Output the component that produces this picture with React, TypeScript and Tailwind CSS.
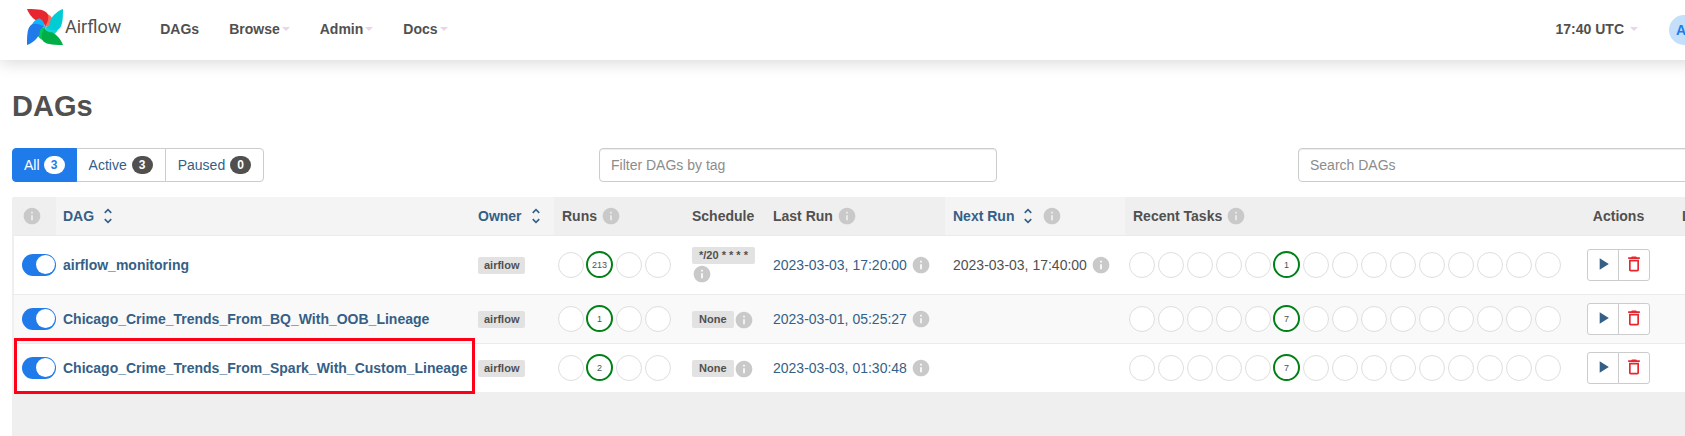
import React from "react";

const ICONS = {
  info: "M12 2C6.48 2 2 6.48 2 12s4.48 10 10 10 10-4.48 10-10S17.52 2 12 2zm1 15h-2v-6h2v6zm0-8h-2V7h2v2z",
  sort: "M12 5.83L15.17 9l1.41-1.41L12 3 7.41 7.59 8.83 9 12 5.83zm0 12.34L8.83 15l-1.41 1.41L12 21l4.59-4.59L15.17 15 12 18.17z",
  play: "M8 5v14l11-7z",
  trash:
    "M16 9v10H8V9h8m-1.5-6h-5l-1 1H5v2h14V4h-3.5l-1-1zM18 7H6v12c0 1.1.9 2 2 2h8c1.1 0 2-.9 2-2V7z",
};

function Icon({ name, className = "" }: { name: keyof typeof ICONS; className?: string }) {
  return (
    <svg viewBox="0 0 24 24" className={`size-5 shrink-0 fill-current ${className}`} aria-hidden="true">
      <path d={ICONS[name]} />
    </svg>
  );
}

const Info = () => <Icon name="info" className="text-[#c9c9c9]" />;

const BLADES = [
  { angle: 0, main: "#e8262d", light: "#ff6b5b" },
  { angle: 90, main: "#00ccd6", light: "#11d5e0" },
  { angle: 180, main: "#00ad46", light: "#04c95a" },
  { angle: 270, main: "#1f7bea", light: "#0cb6ff" },
];

function Pinwheel() {
  return (
    <svg viewBox="0 0 108 108" className="size-9" aria-hidden="true">
      {BLADES.map((b) => (
        <g key={b.angle} transform={`rotate(${b.angle} 54 54)`}>
          <path fill={b.light} d="M58 14C70 17 76 26 80 37C75 48 64 52 54 54C58 40 64 27 58 14Z" />
          <path fill={b.main} d="M0 0C36 0 54 2 62 15C67 27 62 40 54 54C54 46 48 37 33 38C18 30 6 16 0 0Z" />
        </g>
      ))}
    </svg>
  );
}

const Caret = () => (
  <span className="border-x-4 border-t-4 border-x-transparent border-t-[#e8d5e8]" aria-hidden="true" />
);

function NavItem({ label, menu = true }: { label: string; menu?: boolean }) {
  return (
    <a href="#" className="flex items-center gap-0.5 px-[15px] leading-5">
      {label}
      {menu && <Caret />}
    </a>
  );
}

function Circles({ total, at, value }: { total: number; at: number; value: number }) {
  return (
    <div className="flex h-7 items-center">
      {Array.from({ length: total }, (_, i) => (
        <span key={i} className="flex w-[29px] shrink-0 justify-center">
          {i === at ? (
            <a
              href="#"
              className="flex size-[27px] items-center justify-center rounded-full border-2 border-[#008016] bg-white text-[9px] leading-3 text-[#51504f]"
            >
              {value}
            </a>
          ) : (
            <span className="size-[26px] rounded-full border border-[#dedede] bg-white" />
          )}
        </span>
      ))}
    </div>
  );
}

const Tag = ({ children, className = "px-1.5" }: { children: React.ReactNode; className?: string }) => (
  <a href="#" className={`rounded-xs bg-[#e2e2e2] text-[11px] leading-[17px] font-bold whitespace-nowrap text-[#51504f] ${className}`}>
    {children}
  </a>
);

const FILTERS = [
  { label: "All", count: 3, box: "z-10 gap-1 rounded-l border-[#1f7bea] bg-[#1f7bea] px-[11px] text-white", badge: "bg-white text-[#1f7bea]" },
  { label: "Active", count: 3, box: "-ml-px gap-[5px] border-[#ccc] bg-white px-3 text-[#355f86]", badge: "bg-[#51504f] text-white" },
  { label: "Paused", count: 0, box: "-ml-px gap-[5px] rounded-r border-[#ccc] bg-white px-3 text-[#355f86]", badge: "bg-[#51504f] text-white" },
];

const ROWS = [
  { id: "airflow_monitoring", runs: 213, schedule: "*/20 * * * *", last: "2023-03-03, 17:20:00", next: "2023-03-03, 17:40:00", tasks: 1, size: "h-[59px]", bg: "bg-white" },
  { id: "Chicago_Crime_Trends_From_BQ_With_OOB_Lineage", runs: 1, schedule: "None", last: "2023-03-01, 05:25:27", next: "", tasks: 7, size: "h-[49px]", bg: "bg-[#f9f9f9]" },
  { id: "Chicago_Crime_Trends_From_Spark_With_Custom_Lineage", runs: 2, schedule: "None", last: "2023-03-03, 01:30:48", next: "", tasks: 7, size: "h-[49px]", bg: "bg-white", highlighted: true },
];

const INPUT =
  "h-[34px] rounded border border-[#ccc] bg-white px-[11px] text-sm text-[#51504f] shadow-[inset_0_1px_1px_rgba(0,0,0,0.075)] outline-none placeholder:text-[#8c8c8c]";

export default function App() {
  return (
    <div className="overflow-x-hidden bg-white font-['Liberation_Sans',Arial,sans-serif] text-sm text-[#51504f]">
      <div className="-mr-[62px]">
        <header className="flex h-[60px] items-center justify-between pr-12 pl-[27px] font-bold shadow-[0_2px_16px_rgba(0,0,0,0.17)]">
          <div className="flex items-center pb-1.5">
            <a href="#" className="mr-6 flex items-center gap-0.5 font-['Roboto',sans-serif] text-lg font-normal">
              <Pinwheel />
              Airflow
            </a>
            <nav className="flex items-center pt-1">
              <NavItem label="DAGs" menu={false} />
              <NavItem label="Browse" />
              <NavItem label="Admin" />
              <NavItem label="Docs" />
            </nav>
          </div>
          <div className="flex items-center">
            <a href="#" className="flex items-center gap-1.5 px-[15px] pb-0.5 leading-5">
              17:40 UTC
              <Caret />
            </a>
            <a href="#" className="ml-4 flex size-[30px] items-center rounded-full bg-[#c3dffa] pl-[7px] text-[#1f7bea]">
              A
            </a>
          </div>
        </header>

        <main className="px-3 pt-[30px]">
          <h2 className="mb-[26px] text-[29px] leading-8 font-bold">DAGs</h2>

          <div className="mb-[15px] grid grid-cols-[587fr_699fr_437fr]">
            <div className="flex">
              {FILTERS.map((f) => (
                <button key={f.label} type="button" className={`flex h-[34px] items-center border ${f.box}`}>
                  {f.label}
                  <span className={`flex h-[18px] w-[21px] items-center justify-center rounded-full text-xs font-bold ${f.badge}`}>
                    {f.count}
                  </span>
                </button>
              ))}
            </div>
            <div>
              <input aria-label="Filter DAGs by tag" placeholder="Filter DAGs by tag" className={`w-[398px] ${INPUT}`} />
            </div>
            <input aria-label="Search DAGs" placeholder="Search DAGs" className={`w-full ${INPUT}`} />
          </div>

          <div className="rounded-t-xs border-l-2 border-[#efefef] bg-[#efefef] pb-11">
            <table className="w-full table-fixed border-collapse text-left">
              <colgroup>
                <col className="w-[42px]" />
                <col />
                <col className="w-[84px]" />
                <col className="w-[130px]" />
                <col className="w-[81px]" />
                <col className="w-[180px]" />
                <col className="w-[180px]" />
                <col className="w-[454px]" />
                <col className="w-[79px]" />
                <col className="w-[77px]" />
              </colgroup>
              <thead>
                <tr className="h-[38px] whitespace-nowrap">
                  <th className="px-2">
                    <Info />
                  </th>
                  <th className="bg-[#f4f4f4] px-[7px]">
                    <a href="#" className="flex items-center gap-1 text-[#355f86]">
                      DAG <Icon name="sort" />
                    </a>
                  </th>
                  <th className="bg-[#f4f4f4] px-2">
                    <a href="#" className="flex items-center gap-1 text-[#355f86]">
                      Owner <Icon name="sort" />
                    </a>
                  </th>
                  <th className="px-2">
                    <span className="flex items-center gap-1">
                      Runs <Info />
                    </span>
                  </th>
                  <th className="px-2">Schedule</th>
                  <th className="px-2">
                    <span className="flex items-center gap-1">
                      Last Run <Info />
                    </span>
                  </th>
                  <th className="bg-[#f4f4f4] px-2">
                    <span className="flex items-center gap-1">
                      <a href="#" className="flex items-center gap-1 text-[#355f86]">
                        Next Run <Icon name="sort" />
                      </a>
                      <Info />
                    </span>
                  </th>
                  <th className="px-2">
                    <span className="flex items-center gap-1">
                      Recent Tasks <Info />
                    </span>
                  </th>
                  <th className="px-2 text-center">Actions</th>
                  <th className="px-6">Links</th>
                </tr>
              </thead>
              <tbody>
                {ROWS.map((r) => (
                  <tr key={r.id} className={`border-t border-[#ebebeb] ${r.size} ${r.bg}`}>
                    <td className="relative pl-2">
                      <label className="flex h-[22px] w-[34px] items-center">
                        <input
                          type="checkbox"
                          role="switch"
                          defaultChecked
                          aria-label={`Toggle ${r.id}`}
                          className="flex h-[22px] w-[34px] appearance-none items-center justify-end rounded-full bg-[#1f7bea] px-px before:size-[19px] before:rounded-full before:bg-white"
                        />
                      </label>
                      {r.highlighted && (
                        <span className="pointer-events-none absolute -top-1.5 left-0 h-14 w-[461px] border-3 border-[#ff0018]" />
                      )}
                    </td>
                    <td className="px-[7px] font-bold whitespace-nowrap text-[#355f86]">
                      <a href="#">{r.id}</a>
                    </td>
                    <td className="px-2 pt-0.5">
                      <span className="flex">
                        <Tag>airflow</Tag>
                      </span>
                    </td>
                    <td className="pl-0.5">
                      <Circles total={4} at={1} value={r.runs} />
                    </td>
                    <td className="pt-0.5 pl-2">
                      <span className="flex flex-wrap items-center">
                        <Tag className="px-[7px]">{r.schedule}</Tag>
                        <Info />
                      </span>
                    </td>
                    <td className="px-2 whitespace-nowrap">
                      <span className="flex items-center gap-1">
                        <a href="#" className="text-[#355f86]">
                          {r.last}
                        </a>
                        <Info />
                      </span>
                    </td>
                    <td className="px-2 whitespace-nowrap">
                      {r.next && (
                        <span className="flex items-center gap-1">
                          <time>{r.next}</time>
                          <Info />
                        </span>
                      )}
                    </td>
                    <td className="pl-0.5">
                      <Circles total={15} at={5} value={r.tasks} />
                    </td>
                    <td className="pl-2">
                      <span className="flex">
                        <button
                          type="button"
                          aria-label={`Trigger ${r.id}`}
                          className="flex h-8 w-8 items-center justify-center rounded-l-[3px] border border-[#ccc] bg-white pb-0.5 text-[#355f86]"
                        >
                          <Icon name="play" />
                        </button>
                        <button
                          type="button"
                          aria-label={`Delete ${r.id}`}
                          className="-ml-px flex h-8 w-8 items-center justify-center rounded-r-[3px] border border-[#ccc] bg-white pb-0.5 text-[#e8262d]"
                        >
                          <Icon name="trash" />
                        </button>
                      </span>
                    </td>
                    <td />
                  </tr>
                ))}
              </tbody>
            </table>
          </div>
        </main>
      </div>
    </div>
  );
}
